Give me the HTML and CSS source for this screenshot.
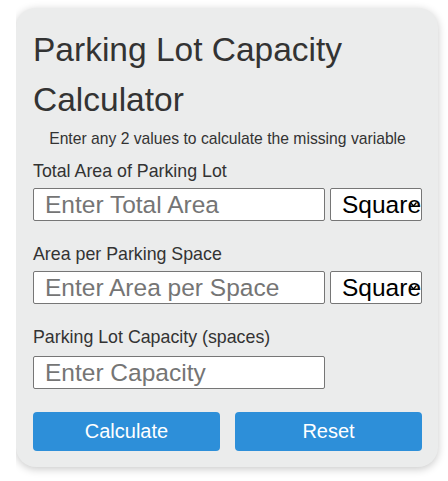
FILE: index.html
```html
<!DOCTYPE html>
<html lang="en">
<head>
    <meta charset="UTF-8">
    <meta name="viewport" content="width=device-width, initial-scale=1.0">
    <title>Parking Lot Capacity Calculator</title>
    <link rel="stylesheet" href="styles.css">
</head>
<body>
    <div class="page">
        <div class="calculator">
            <h1>Parking Lot Capacity Calculator</h1>
            <p class="hint">Enter any 2 values to calculate the missing variable</p>

            <label for="totalArea" class="first">Total Area of Parking Lot</label>
            <div class="row">
                <input type="number" id="totalArea" placeholder="Enter Total Area">
                <select id="totalAreaUnit">
                    <option>Square Feet</option>
                    <option>Square Meters</option>
                </select>
            </div>

            <label for="spaceArea">Area per Parking Space</label>
            <div class="row">
                <input type="number" id="spaceArea" placeholder="Enter Area per Space">
                <select id="spaceAreaUnit">
                    <option>Square Feet</option>
                    <option>Square Meters</option>
                </select>
            </div>

            <label for="capacity" class="last">Parking Lot Capacity (spaces)</label>
            <div class="row row-last">
                <input type="number" id="capacity" placeholder="Enter Capacity">
            </div>

            <div class="buttons">
                <button type="button" onclick="calculate()">Calculate</button>
                <button type="button" onclick="resetForm()">Reset</button>
            </div>
        </div>
    </div>

    <script>
        const factor = { 'Square Feet': 1, 'Square Meters': 10.7639 };

        function calculate() {
            const total = parseFloat(document.getElementById('totalArea').value);
            const space = parseFloat(document.getElementById('spaceArea').value);
            const cap = parseFloat(document.getElementById('capacity').value);
            const tf = factor[document.getElementById('totalAreaUnit').value];
            const sf = factor[document.getElementById('spaceAreaUnit').value];

            if (!isNaN(total) && !isNaN(space)) {
                document.getElementById('capacity').value = Math.floor((total * tf) / (space * sf));
            } else if (!isNaN(total) && !isNaN(cap)) {
                document.getElementById('spaceArea').value = ((total * tf) / cap / sf).toFixed(2);
            } else if (!isNaN(space) && !isNaN(cap)) {
                document.getElementById('totalArea').value = ((space * sf * cap) / tf).toFixed(2);
            } else {
                alert('Please enter any 2 values.');
            }
        }

        function resetForm() {
            document.getElementById('totalArea').value = '';
            document.getElementById('spaceArea').value = '';
            document.getElementById('capacity').value = '';
        }
    </script>
</body>
</html>
```

FILE: styles.css
```css
body {
    font-family: "Liberation Sans", Arial, sans-serif;
    margin: 0;
    background-color: #fff;
}
.page {
    margin-left: 16px;
    padding: 8px 10px 14px 0;
    overflow: hidden;
}
.calculator {
    background: #ebecec;
    border-radius: 20px;
    padding: 17px 16px 16px 17px;
    box-shadow: 0 2px 8px rgba(0, 0, 0, 0.22);
    color: #333;
}
h1 {
    margin: 0;
    font-size: 33.5px;
    font-weight: normal;
    line-height: 50px;
}
.hint {
    margin: 4px 0 0;
    text-align: center;
    font-size: 15.7px;
    line-height: 20px;
}
label {
    display: block;
    margin-top: 23px;
    font-size: 17.8px;
    line-height: 20px;
}
label.first {
    margin-top: 12px;
}
.row {
    display: flex;
    gap: 5px;
    margin-top: 7px;
}
.row-last {
    margin-top: 9px;
}
input {
    box-sizing: border-box;
    width: 292px;
    height: 33px;
    margin: 0;
    padding: 0 11px;
    border: 1px solid #767676;
    border-radius: 2px;
    background: #fff;
    font-family: inherit;
    font-size: 24.5px;
    color: #222;
}
input::placeholder {
    color: #757575;
}
select {
    box-sizing: border-box;
    width: 92px;
    height: 33px;
    margin: 0;
    padding: 0 0 0 11px;
    border: 1px solid #767676;
    border-radius: 2px;
    background: #fff url("data:image/svg+xml,%3Csvg xmlns='http://www.w3.org/2000/svg' width='7' height='5'%3E%3Cpath d='M0.5 0.5L3.5 4L6.5 0.5' fill='none' stroke='%23000' stroke-width='1.4'/%3E%3C/svg%3E") no-repeat right 4px center;
    font-family: inherit;
    font-size: 24.5px;
    color: #000;
    appearance: none;
}
.buttons {
    display: flex;
    gap: 15px;
    margin-top: 23px;
}
button {
    flex: 1;
    height: 39px;
    border: none;
    border-radius: 4px;
    background-color: #2d8fd9;
    color: #fff;
    font-family: inherit;
    font-size: 20px;
    cursor: pointer;
}
```
